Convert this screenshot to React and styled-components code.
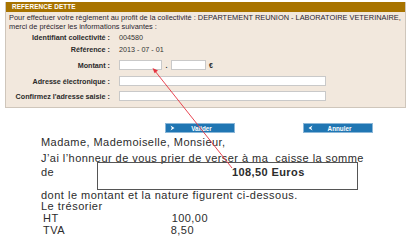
import React from "react";
import styled, { createGlobalStyle } from "styled-components";

const Global = createGlobalStyle`
  html, body { margin: 0; padding: 0; background: #ffffff; }
  body { font-family: "Liberation Sans", Arial, sans-serif; }
`;

const Page = styled.div`
  position: relative;
  width: 410px;
  height: 240px;
  overflow: hidden;
  padding-top: 2px;
  box-sizing: border-box;
`;

const Panel = styled.section`
  margin: 0 4px 0 5px;
  border: 1px solid #cfc6bb;
  border-top: none;
  background: #f2e8dd;
  padding-bottom: 6px;
`;

const Header = styled.div`
  height: 10px;
  background: #a87400;
  color: #fff;
  font-weight: bold;
  font-size: 6.4px;
  line-height: 10px;
  padding-left: 6px;
  letter-spacing: 0.1px;
`;

const Intro = styled.p`
  margin: 0;
  padding: 1px 0 0 3px;
  font-size: 7.4px;
  line-height: 9px;
  color: #2a2530;
  white-space: nowrap;
`;

const Row = styled.div`
  display: grid;
  grid-template-columns: 104px 1fr;
  column-gap: 9px;
  align-items: center;
  height: 10px;
  margin-top: ${(p) => p.$mt}px;
  font-size: 7.2px;
  color: #2a2a2a;
`;

const Label = styled.span`
  text-align: right;
  font-weight: bold;
  white-space: nowrap;
`;

const Value = styled.span`
  color: #333;
  white-space: nowrap;
`;

const Field = styled.div`
  display: flex;
  align-items: center;
  gap: 3px;
`;

const Input = styled.div`
  width: ${(p) => p.$w}px;
  height: 10px;
  box-sizing: border-box;
  background: #fff;
  border: 1px solid #c9c9c9;
`;

const Sep = styled.span`
  font-size: 7px;
  font-weight: bold;
  width: 3px;
  text-align: center;
`;

const Buttons = styled.div`
  display: flex;
  margin-top: 15px;
  padding-left: 165px;
  gap: 68px;
`;

const Button = styled.div`
  display: flex;
  align-items: center;
  width: 70px;
  height: 10px;
  box-sizing: border-box;
  background: #2076b3;
  border: 1px solid #8bb7d8;
  color: #fff;
  font-size: 6.3px;
  font-weight: bold;
  padding-left: 4px;
`;

const BtnText = styled.span`
  flex: 1;
  text-align: center;
  padding-right: 6px;
`;

const Letter = styled.div`
  padding-left: 41px;
  margin-top: 2px;
  font-family: "Liberation Sans", Arial, sans-serif;
  font-size: 11px;
  letter-spacing: 0.45px;
  color: #2c2c2c;
`;

const Line = styled.div`
  height: ${(p) => p.$h}px;
  line-height: ${(p) => p.$h}px;
  white-space: pre;
`;

const AmountRow = styled.div`
  display: flex;
  align-items: flex-start;
  margin-top: -5px;
`;

const De = styled.span`
  width: 56px;
  padding-top: 4px;
  line-height: 12px;
`;

const AmountBox = styled.div`
  width: 261px;
  height: 28px;
  box-sizing: border-box;
  border: 1px solid #555;
  border-right-width: 1.5px;
  padding: 3px 0 0 134px;
  font-weight: bold;
  font-size: 11px;
  letter-spacing: 0.4px;
  line-height: 13px;
`;

const Small = styled.div`
  line-height: 10.5px;
  letter-spacing: 0.5px;
`;

const Table = styled.div`
  display: grid;
  grid-template-columns: 125px 40px;
  margin-top: 2px;
  padding-left: 2px;
  line-height: 11.5px;
`;

const Num = styled.span`
  text-align: right;
  padding-right: ${(p) => p.$pr || 0}px;
`;

const Arrow = styled.svg`
  position: absolute;
  left: 0;
  top: 0;
  pointer-events: none;
`;

export default function App() {
  return (
    <Page>
      <Global />
      <Panel>
        <Header>REFERENCE DETTE</Header>
        <Intro>
          Pour effectuer votre règlement au profit de la collectivité : DEPARTEMENT REUNION - LABORATOIRE VETERINAIRE,
          <br />
          merci de préciser les informations suivantes :
        </Intro>
        <Row $mt={1}>
          <Label>Identifiant collectivité :</Label>
          <Value>004580</Value>
        </Row>
        <Row $mt={2}>
          <Label>Référence :</Label>
          <Value>2013 - 07 - 01</Value>
        </Row>
        <Row $mt={6}>
          <Label>Montant :</Label>
          <Field>
            <Input $w={43} />
            <Sep>.</Sep>
            <Input $w={35} />
            <Sep>€</Sep>
          </Field>
        </Row>
        <Row $mt={6}>
          <Label>Adresse électronique :</Label>
          <Field>
            <Input $w={207} />
          </Field>
        </Row>
        <Row $mt={5}>
          <Label>Confirmez l'adresse saisie :</Label>
          <Field>
            <Input $w={207} />
          </Field>
        </Row>
      </Panel>
      <Buttons>
        <Button>
          <svg width="5" height="6" viewBox="0 0 5 6">
            <path d="M0.5 0.5 L4.5 3 L0.5 5.5 L1.8 3 Z" fill="#fff" />
          </svg>
          <BtnText>Valider</BtnText>
        </Button>
        <Button>
          <svg width="5" height="6" viewBox="0 0 5 6">
            <path d="M4.5 0.5 L0.5 3 L4.5 5.5 L3.2 3 Z" fill="#fff" />
          </svg>
          <BtnText>Annuler</BtnText>
        </Button>
      </Buttons>
      <Letter>
        <Line $h={14}>Madame, Mademoiselle, Monsieur,</Line>
        <Line $h={18}>J’ai l’honneur de vous prier de verser à ma  caisse la somme</Line>
        <AmountRow>
          <De>de</De>
          <AmountBox>108,50 Euros</AmountBox>
        </AmountRow>
        <Small>dont le montant et la nature figurent ci-dessous.</Small>
        <Small>Le trésorier</Small>
        <Table>
          <span>HT</span>
          <Num>100,00</Num>
          <span>TVA</span>
          <Num $pr={14}>8,50</Num>
        </Table>
      </Letter>
      <Arrow width="410" height="240" viewBox="0 0 410 240">
        <line x1="155" y1="71" x2="232" y2="168" stroke="#e5323f" strokeWidth="0.9" />
        <path d="M152.5 68 L158 70.6 L154.6 73.3 Z" fill="#e5323f" />
      </Arrow>
    </Page>
  );
}
